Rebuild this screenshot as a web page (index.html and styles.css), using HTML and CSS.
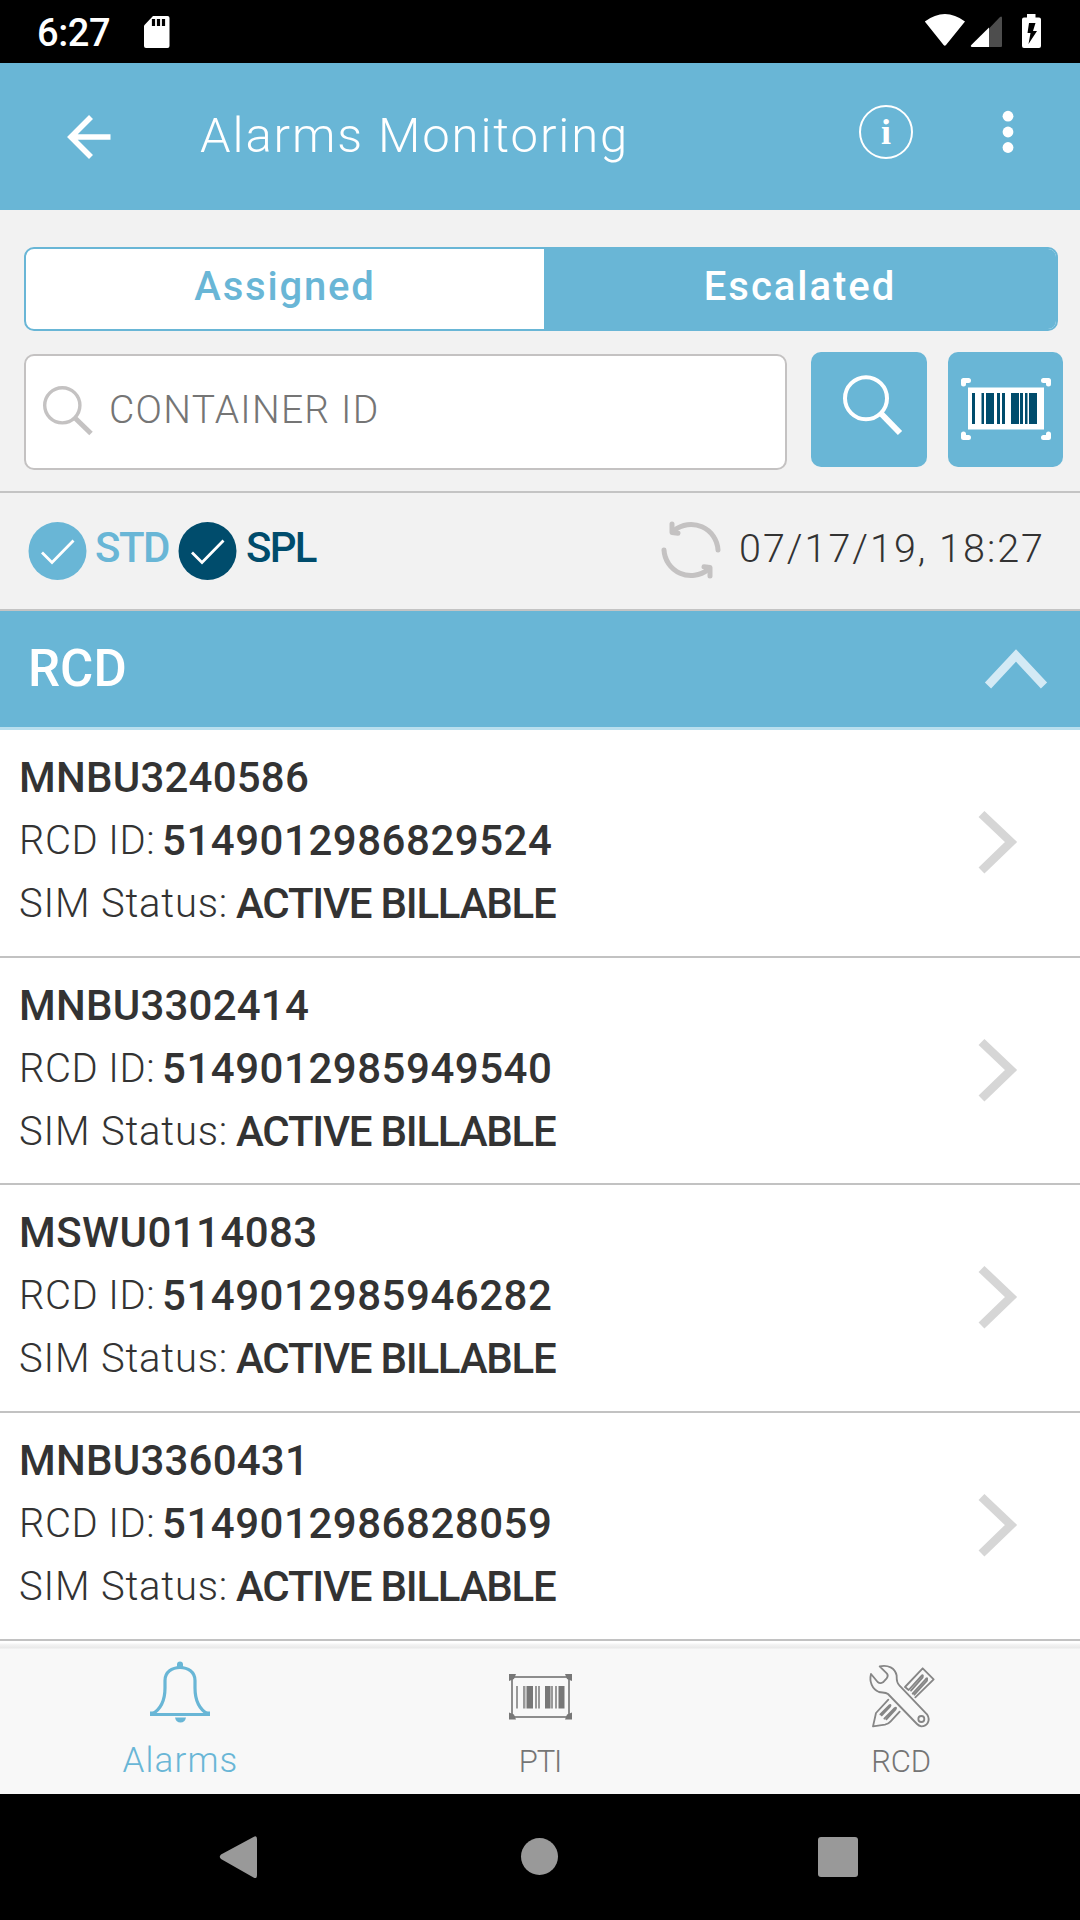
FILE: index.html
```html
<!DOCTYPE html>
<html lang="en">
<head>
<meta charset="utf-8">
<title>Alarms Monitoring</title>
<link rel="stylesheet" href="styles.css">
</head>
<body>
<svg class="defs" width="0" height="0">
  <symbol id="chevron" viewBox="0 0 42 66"><path d="M4.500 5L34 33 4.500 61.500" fill="none" stroke="#d6d6d6" stroke-width="8.500"/></symbol>
</svg>
<div class="screen">
  <div class="status">
    <span class="clock">6:27</span>
    <svg class="sd" width="28" height="34" viewBox="0 0 28 34"><path d="M10 1h14.500a2 2 0 0 1 2 2v28a2 2 0 0 1-2 2H3a2 2 0 0 1-2-2V10.500z" fill="#fff"/><path d="M10.500 4v7M15.500 4v7M20.500 4v7" stroke="#000" stroke-width="3.200"/></svg>
    <svg class="sys" width="120" height="36" viewBox="0 0 120 36"><path d="M.8 8.500Q21-6.500 41 8.500L22 32q-1.200 1.500-2.400 0z" fill="#fff"/><path d="M65 15.500L76 4q2-1.500 2 1v28q0 1-1 1H65z" fill="#4d4d4d"/><path d="M65 14.500V34H48q-2-.5-.7-2z" fill="#fff"/><path d="M103 1h8.500v3.500h3.500q2 0 2 2V33q0 2-2 2h-15q-2 0-2-2V6.500q0-2 2-2h3z" fill="#fff"/><path d="M105 10h6.500l-2.500 8h4l-8.500 13 2-11h-3z" fill="#000"/></svg>
  </div>
  <header class="appbar">
    <svg class="back" width="44" height="44" viewBox="0 0 44 44"><path d="M43.500 22H5M24 2L4 22l20 20" fill="none" stroke="#fff" stroke-width="5.600"/></svg>
    <h1>Alarms Monitoring</h1>
    <span class="info">i</span>
    <svg class="dots" width="12" height="44" viewBox="0 0 12 44"><g fill="#fff"><circle cx="6" cy="6.200" r="5.400"/><circle cx="6" cy="22" r="5.400"/><circle cx="6" cy="37.500" r="5.400"/></g></svg>
  </header>
  <section class="controls">
    <div class="segment"><span class="seg">Assigned</span><span class="seg active">Escalated</span></div>
    <div class="search">
      <div class="field">
        <svg width="52" height="52" viewBox="0 0 52 52"><g fill="none" stroke="#c4c2c2"><circle cx="22.300" cy="22.300" r="17.600" stroke-width="3.400"/><path d="M35 35L51 50.500" stroke-width="5"/></g></svg>
        <span>CONTAINER ID</span>
      </div>
      <div class="btn find"><svg width="62" height="62" viewBox="0 0 62 62"><g fill="none" stroke="#fff"><circle cx="24" cy="24.200" r="21" stroke-width="4"/><path d="M39 39.500L58 59" stroke-width="6"/></g></svg></div>
      <div class="btn scan"><svg width="92" height="64" viewBox="0 0 92 64"><path d="M3.500 7V3.500h5M88.500 7V3.500h-5M3.500 57v3.500h5M88.500 57v3.500h-5" fill="none" stroke="#fff" stroke-width="5" stroke-linecap="round" stroke-linejoin="round"/><path d="M8 10.500h76v42H8z" fill="#fff"/><path d="M12 16h3v31h-3zM21.500 16h2.500v31h-2.500zM26 16h8v31h-8zM37 16h3v31h-3zM42 16h3v31h-3zM51 16h8v31h-8zM60 16h3v31h-3zM65 16h2.500v31H65zM69 16h8v31h-8z" fill="#004c6c"/></svg></div>
    </div>
  </section>
  <section class="filters">
    <svg width="59" height="60" viewBox="0 0 59 60"><circle cx="29.500" cy="30" r="29" fill="#69b6d6"/><path d="M14 31.500L24 41.500 45.500 19.500" fill="none" stroke="#fff" stroke-width="2.800"/></svg>
    <span class="std">STD</span>
    <svg width="59" height="60" viewBox="0 0 59 60"><circle cx="29.500" cy="30" r="29" fill="#004c6c"/><path d="M14 31.500L24 41.500 45.500 19.500" fill="none" stroke="#fff" stroke-width="2.800"/></svg>
    <span class="spl">SPL</span>
    <svg class="refresh" width="60" height="60" viewBox="0 0 60 60"><g fill="none" stroke="#c4c2c2" stroke-width="5" stroke-linecap="round" stroke-linejoin="round"><path d="M13 10.500A27 27 0 0 1 57 30M47 49.500A27 27 0 0 1 3 30"/><path d="M11 4v8.500l6 .7M49 56v-8.500l-6-.7"/></g></svg>
    <time>07/17/19, 18:27</time>
  </section>
  <div class="group">
    <h2>RCD</h2>
    <svg width="64" height="42" viewBox="0 0 64 42"><path d="M4 37.500L32 7.500 60 37.500" fill="none" stroke="#d4eaf5" stroke-width="8.500"/></svg>
  </div>
  <main class="list">
    <article><div class="text"><b>MNBU3240586</b><p class="id"><span>RCD ID:</span><b>5149012986829524</b></p><p class="sim"><span>SIM Status:</span><b>ACTIVE BILLABLE</b></p></div><svg width="42" height="66"><use href="#chevron"/></svg></article>
    <article><div class="text"><b>MNBU3302414</b><p class="id"><span>RCD ID:</span><b>5149012985949540</b></p><p class="sim"><span>SIM Status:</span><b>ACTIVE BILLABLE</b></p></div><svg width="42" height="66"><use href="#chevron"/></svg></article>
    <article><div class="text"><b class="wide">MSWU0114083</b><p class="id"><span>RCD ID:</span><b>5149012985946282</b></p><p class="sim"><span>SIM Status:</span><b>ACTIVE BILLABLE</b></p></div><svg width="42" height="66"><use href="#chevron"/></svg></article>
    <article><div class="text"><b>MNBU3360431</b><p class="id"><span>RCD ID:</span><b>5149012986828059</b></p><p class="sim"><span>SIM Status:</span><b>ACTIVE BILLABLE</b></p></div><svg width="42" height="66"><use href="#chevron"/></svg></article>
  </main>
  <nav class="tabs">
    <div class="tab on">
      <svg width="62" height="64" viewBox="0 0 62 64"><path d="M2.500 54.500C11 50 16 42 16 28V20.500C16 12 23 7.500 31 7.500S46 12 46 20.500V28c0 14 5 22 13.500 26.500z" fill="none" stroke="#69b6d6" stroke-width="3.200"/><path d="M28 8V4.500Q28 1.500 31 1.500t3 3V8zM1 51.500h4l-2 4.500H1zM61 51.500h-4l2 4.500h2zM26 57.500h11q-1 5-5.500 5t-5.500-5z" fill="#69b6d6"/></svg>
      <span>Alarms</span>
    </div>
    <div class="tab">
      <svg width="64" height="64" viewBox="0 0 64 64"><path d="M4 17h57v40H4z" fill="none" stroke="#8d8d8d" stroke-width="2"/><path d="M1 14h7l-2 5-5 2zM64 14h-7l2 5 5 2zM1 59.500h7l-2-5-5-2zM64 59.500h-7l2-5 5-2z" fill="#777"/><path d="M8 26h2v22.500H8zM15 26h2.500v22.500H15zM27 26h2v22.500h-2zM30 26h2v22.500h-2zM43 26h2v22.500h-2zM47 26h2v22.500h-2z" fill="#999"/><path d="M18.500 26h6.500v22.500h-6.500zM37 26h5.500v22.500H37zM50.500 26h6v22.500h-6z" fill="#777"/></svg>
      <span class="pti">PTI</span>
    </div>
    <div class="tab">
      <svg class="tools" width="66" height="64" viewBox="146 135 198 192"><g fill="none" stroke="#868686" stroke-width="5.500" stroke-linejoin="round" stroke-linecap="round"><path d="M178 142C203 137 224 146 229 170C229 183 228 191 237 199L320 286C332 305 320 322 303 322C298 321 294 319 290 315L203 225C194 218 186 222 176 219C156 211 146 188 152 165L172 189C178 194 183 193 188 190L199 178C203 173 203 168 200 164Z"/><circle cx="303" cy="300" r="9"/><path d="M254 204L307 148 340 181 285 235M254 204L265 213L302 172Q310 164 307 175L272 215M277 224L314 183Q323 171 320 185L282 227M204 242L167 282 158 322 194 317Q204 315 211 307L238 278M180 286L207 259Q213 256 209 263L184 289M192 299L222 268Q231 263 225 272L198 301"/></g></svg>
      <span class="rcd">RCD</span>
    </div>
  </nav>
  <footer class="sysnav">
    <svg width="1080" height="126" viewBox="0 0 1080 126"><g fill="#999"><path d="M221 60.500L253.500 43q3.500-2 3.500 2v36q0 4.500-3.500 2.500L221 65q-2.500-2.200 0-4.500z"/><circle cx="539.500" cy="62.500" r="18.500"/><rect x="818" y="43" width="40" height="40" rx="3"/></g></svg>
  </footer>
</div>
</body>
</html>
```
FILE: styles.css
```css
* { box-sizing: border-box; margin: 0; padding: 0; }
body { font-family: Roboto, "Liberation Sans", sans-serif; font-weight: 300; color: #333; background: #fff; }
svg { display: block; flex: none; overflow: visible; }
.defs { position: absolute; }
.screen { width: 1080px; height: 1920px; display: flex; flex-direction: column; overflow: hidden; white-space: nowrap; }

.status { height: 63px; background: #000; color: #fff; display: flex; align-items: flex-start; padding: 0 36px 0 37px; }
.clock { width: 106px; font-size: 38px; font-weight: 500; letter-spacing: -.4px; line-height: 67px; }
.sd { margin-top: 15px; }
.sys { margin: 13px 0 0 auto; }

.appbar { height: 147px; background: #69b6d6; color: #fff; display: flex; align-items: flex-start; padding-left: 67px; }
.back { margin-top: 52px; }
h1 { width: 659px; margin-left: 89px; font-size: 49px; font-weight: 300; letter-spacing: 1.9px; line-height: 145px; }
.info { width: 54px; height: 54px; margin-top: 42px; border: 2.500px solid #fff; border-radius: 50%; font: bold 36px/50px "Liberation Serif", serif; text-align: center; }
.dots { margin: 47px 0 0 89px; }

.controls { height: 283px; background: #f2f2f2; padding: 37px 16px 0 24px; border-bottom: 2px solid #c4c4c4; }
.segment { display: flex; width: 1034px; height: 84px; border: 2px solid #69b6d6; border-radius: 10px; overflow: hidden; background: #fff; font-size: 40px; font-weight: 500; line-height: 75px; text-align: center; color: #69b6d6; }
.seg { width: 518px; letter-spacing: 1.82px; }
.seg.active { width: 512px; letter-spacing: 1.98px; color: #fff; background: #69b6d6; height: 80px; }
.search { display: flex; align-items: flex-start; margin-top: 21px; }
.field { width: 763px; height: 116px; margin-top: 2px; border: 2.500px solid #c4c2c2; border-radius: 10px; background: #fff; display: flex; padding: 26px 0 0 14px; }
.field svg { margin-top: 1px; }
.field span { margin-left: 17px; font-size: 39px; letter-spacing: 1.25px; line-height: 56px; color: #757575; }
.btn { height: 115px; border-radius: 10px; background: #69b6d6; }
.find { width: 116px; margin-left: 24px; padding: 22px 0 0 31px; }
.scan { width: 115px; margin-left: 21px; padding: 25px 0 0 12px; }

.filters { height: 118px; background: #f2f2f2; border-bottom: 2px solid #c4c4c4; display: flex; padding: 28px 0 0 28px; }
.filters span { font-size: 42px; font-weight: 500; line-height: 54px; }
.filters .std { width: 83px; margin-left: 8px; color: #69b6d6; letter-spacing: -1.51px; }
.filters .spl { width: 415px; margin-left: 9px; color: #004c6c; letter-spacing: -1.8px; }
.refresh { margin-top: -1px; }
time { margin-left: 18px; font-size: 39.500px; letter-spacing: 2px; line-height: 55px; }

.group { height: 119px; background: #69b6d6; color: #fff; border-bottom: 3px solid #b9dfee; display: flex; align-items: flex-start; justify-content: space-between; padding: 0 32px 0 28px; }
h2 { font-size: 51px; font-weight: 500; line-height: 115px; }
.group svg { margin-top: 37px; }

.list { display: grid; grid-template-rows: 228px 227px 228px 228px; background: #fff; }
article { display: flex; justify-content: space-between; padding: 16px 61px 0 19px; border-bottom: 2px solid #c2c2c2; }
article > svg { margin-top: 63px; }
.text { font-size: 40px; line-height: 63px; }
.text b { display: block; font-weight: 500; font-size: 42px; letter-spacing: .22px; }
.text .wide { letter-spacing: .45px; }
.text p { display: grid; }
.id { grid-template-columns: 143px auto; }
.sim { grid-template-columns: 217px auto; }
.id span { letter-spacing: .5px; }
.sim span { letter-spacing: .8px; }
.id b { letter-spacing: .53px; }
.sim b { letter-spacing: -1.24px; }

.tabs { height: 153px; background: linear-gradient(#fff 0 2px, #f5f5f5 3px, #e9e9e9 7px, #f8f8f8 8px); display: grid; grid-template-columns: repeat(3, 1fr); padding: 19px 0 0; color: #757575; }
.tab { display: flex; flex-direction: column; align-items: center; font-size: 35px; }
.tab span { line-height: 73px; }
.tab.on { color: #69b6d6; }
.on span { letter-spacing: 1.13px; padding-left: 1px; }
.tab .pti { font-size: 31px; letter-spacing: -1.1px; line-height: 75px; }
.tab .rcd { font-size: 31px; letter-spacing: -.2px; line-height: 67px; padding-left: 2px; }
.tools { margin: 4px 0 0 3px; }
.sysnav { height: 126px; background: #000; }
```
